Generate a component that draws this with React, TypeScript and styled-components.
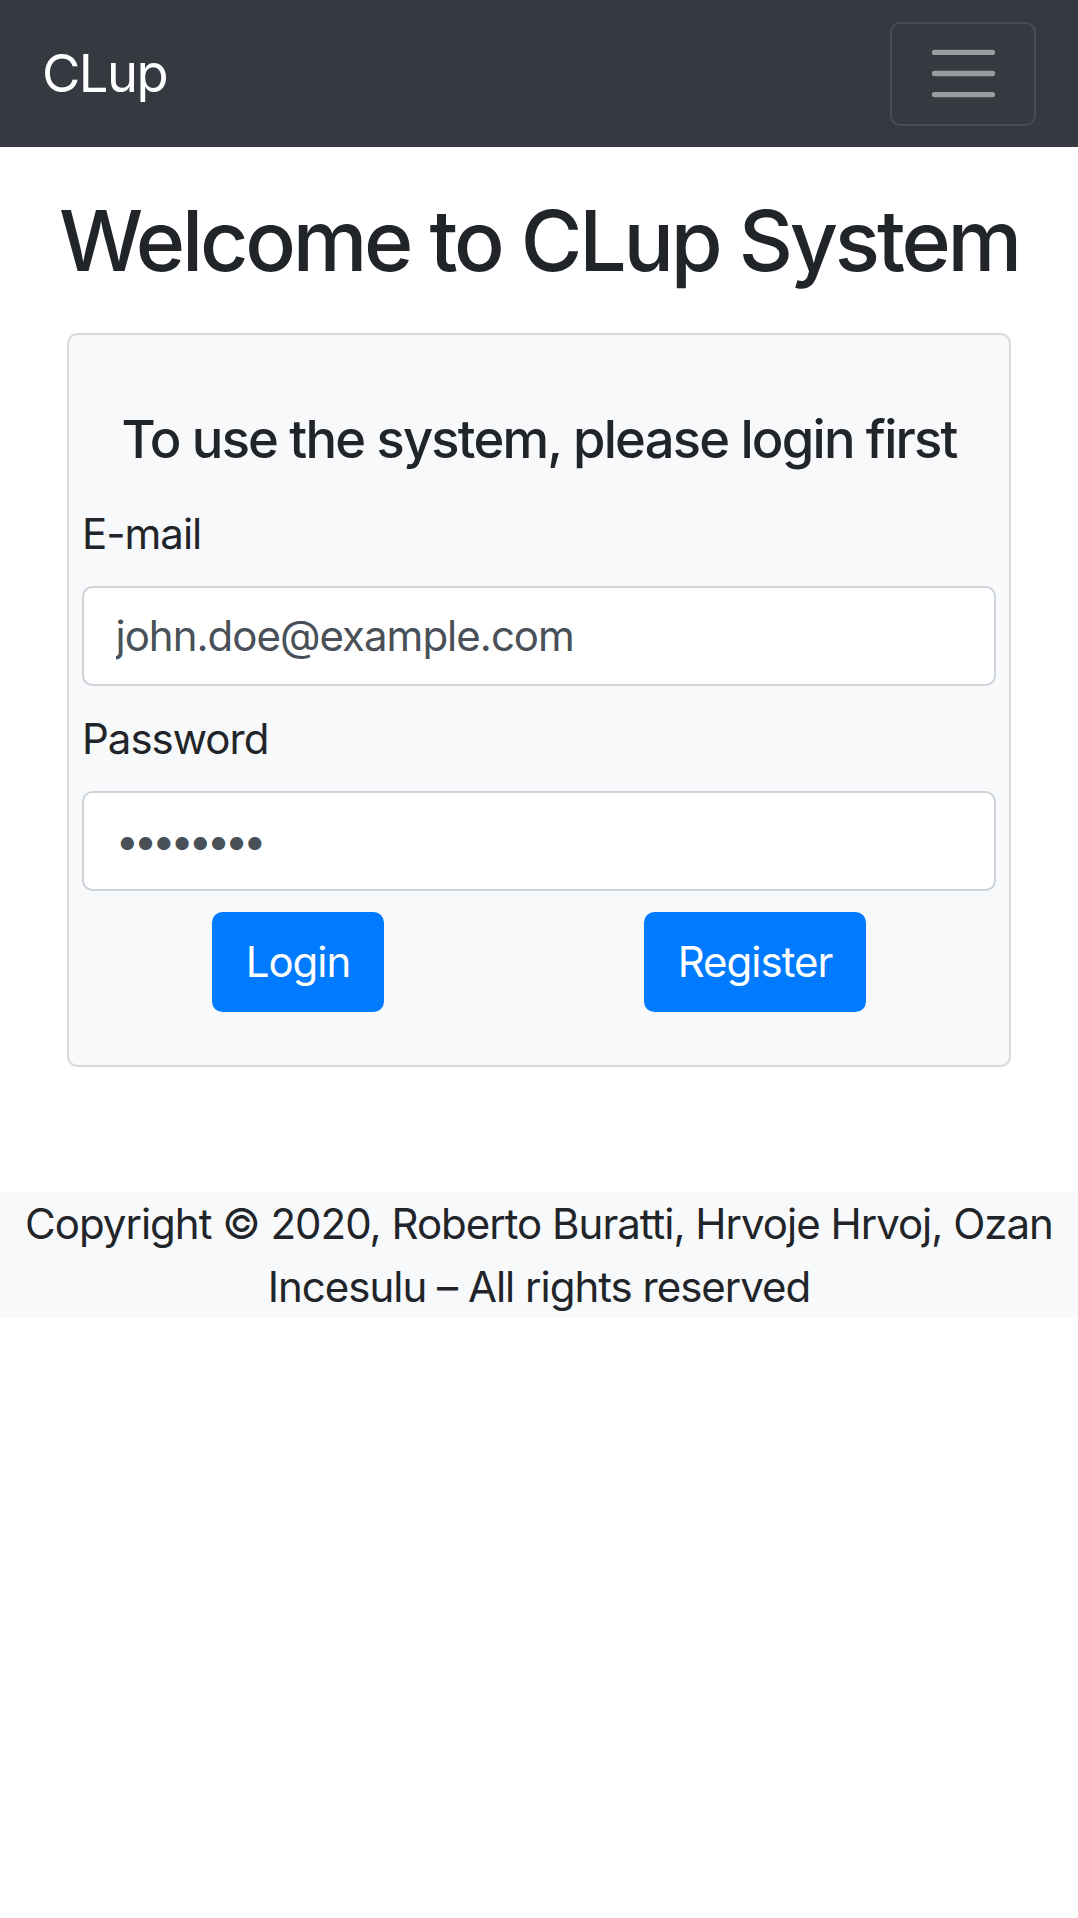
import styled, { createGlobalStyle } from "styled-components";

const GlobalStyle = createGlobalStyle`
  html, body {
    margin: 0;
    padding: 0;
    background: #fff;
  }

  body {
    font-family: Inter, "Noto Sans", "Liberation Sans", sans-serif;
    font-size: 42px;
    line-height: 1.5;
    letter-spacing: -1px;
    color: #212529;
  }

  *, *::before, *::after {
    box-sizing: border-box;
  }
`;

const Navbar = styled.nav`
  display: flex;
  justify-content: space-between;
  align-items: center;
  height: 147px;
  padding: 21px 42px;
  background: #343a40;
`;

const Brand = styled.a`
  padding: 13px 0;
  font-size: 52.5px;
  line-height: 1.5;
  letter-spacing: -1.5px;
  color: #fff;
  text-decoration: none;
`;

const Toggler = styled.button`
  display: flex;
  align-items: center;
  justify-content: center;
  padding: 10.5px 31.5px;
  background: transparent;
  border: 2.6px solid rgba(255, 255, 255, 0.1);
  border-radius: 10.5px;
  cursor: pointer;

  svg {
    display: block;
    width: 79px;
    height: 79px;
  }
`;

const Main = styled.main`
  display: flex;
  flex-direction: column;
  align-items: stretch;
  padding-top: 44px;
`;

const Title = styled.h1`
  margin: 0 0 41px;
  font-size: 84px;
  font-weight: 500;
  line-height: 1.2;
  letter-spacing: -3.2px;
  text-align: center;
`;

const Card = styled.section`
  margin: 0 67px;
  padding: 73px 13px 53px;
  background: #f8f9fa;
  border: 2.6px solid rgba(0, 0, 0, 0.125);
  border-radius: 10.5px;
`;

const CardTitle = styled.h5`
  margin: 0 0 31px;
  font-size: 52.5px;
  font-weight: 500;
  line-height: 1.2;
  letter-spacing: -1.8px;
  text-align: center;
`;

const Form = styled.form`
  display: flex;
  flex-direction: column;
`;

const Label = styled.label`
  display: block;
  margin-bottom: 21px;
`;

interface InputProps {
  $secret?: boolean;
}

const Input = styled.input<InputProps>`
  display: block;
  width: 100%;
  height: 100px;
  margin-bottom: 21px;
  padding: 0 31.5px;
  font-family: inherit;
  font-size: 42px;
  letter-spacing: ${({ $secret }) => ($secret ? "-5.4px" : "-1px")};
  color: #495057;
  background: #fff;
  border: 2.6px solid #ced4da;
  border-radius: 10.5px;
  outline: none;
`;

const ButtonRow = styled.div`
  display: flex;
  justify-content: space-around;
  align-items: center;
`;

const Button = styled.button`
  height: 100px;
  padding: 0 31.5px;
  font-family: inherit;
  font-size: 42px;
  line-height: 1.5;
  letter-spacing: -1px;
  color: #fff;
  background: #007bff;
  border: 2.6px solid #007bff;
  border-radius: 10.5px;
  cursor: pointer;
`;

const Footer = styled.footer`
  margin-top: 125px;
  background: #f8f9fa;
  text-align: center;
  line-height: 63px;
`;

export default function App() {
  return (
    <>
      <GlobalStyle />
      <Navbar>
        <Brand href="#">CLup</Brand>
        <Toggler type="button" aria-label="Toggle navigation">
          <svg viewBox="0 0 30 30">
            <path
              d="M4 7h22M4 15h22M4 23h22"
              stroke="rgba(255, 255, 255, 0.5)"
              strokeWidth="2"
              strokeLinecap="round"
              strokeMiterlimit="10"
            />
          </svg>
        </Toggler>
      </Navbar>

      <Main>
        <Title>Welcome to CLup System</Title>
        <Card>
          <CardTitle>To use the system, please login first</CardTitle>
          <Form onSubmit={(e) => e.preventDefault()}>
            <Label htmlFor="email">E-mail</Label>
            <Input id="email" type="email" defaultValue="john.doe@example.com" />
            <Label htmlFor="password">Password</Label>
            <Input id="password" type="password" defaultValue="password" $secret />
            <ButtonRow>
              <Button type="submit">Login</Button>
              <Button type="button">Register</Button>
            </ButtonRow>
          </Form>
        </Card>
      </Main>

      <Footer>
        Copyright © 2020, Roberto Buratti, Hrvoje Hrvoj, Ozan Incesulu – All
        rights reserved
      </Footer>
    </>
  );
}
